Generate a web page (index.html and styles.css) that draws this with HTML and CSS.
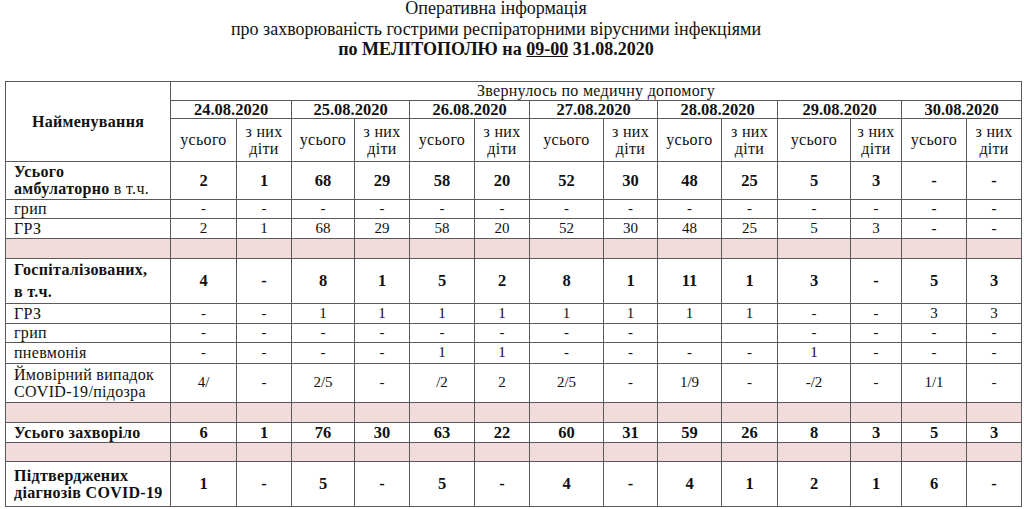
FILE: index.html
```html
<!DOCTYPE html>
<html lang="uk">
<head>
<meta charset="utf-8">
<title>Оперативна інформація</title>
<link rel="stylesheet" href="styles.css">
</head>
<body>
<header class="title">
  <div class="title-line">Оперативна інформація</div>
  <div class="title-line">про захворюваність гострими респіраторними вірусними інфекціями</div>
  <div class="title-line bold">по МЕЛІТОПОЛЮ на <span class="under">09-00</span> 31.08.2020</div>
</header>
<table class="report">
  <colgroup>
    <col class="c-name">
    <col class="c66"><col class="c55">
    <col class="c63"><col class="c55">
    <col class="c65"><col class="c55">
    <col class="c74"><col class="c54">
    <col class="c64"><col class="c56">
    <col class="c73"><col class="c51">
    <col class="c65"><col class="c55">
  </colgroup>
  <thead>
    <tr class="h-top">
      <th rowspan="3" class="name-head">Найменування</th>
      <th colspan="14" class="group-head">Звернулось по медичну допомогу</th>
    </tr>
    <tr class="h-dates">
      <th colspan="2">24.08.2020</th>
      <th colspan="2">25.08.2020</th>
      <th colspan="2">26.08.2020</th>
      <th colspan="2">27.08.2020</th>
      <th colspan="2">28.08.2020</th>
      <th colspan="2">29.08.2020</th>
      <th colspan="2">30.08.2020</th>
    </tr>
    <tr class="h-sub">
      <th>усього</th><th>з них<br>діти</th>
      <th>усього</th><th>з них<br>діти</th>
      <th>усього</th><th>з них<br>діти</th>
      <th>усього</th><th>з них<br>діти</th>
      <th>усього</th><th>з них<br>діти</th>
      <th>усього</th><th>з них<br>діти</th>
      <th>усього</th><th>з них<br>діти</th>
    </tr>
  </thead>
  <tbody>
    <tr class="r38 b">
      <td class="name"><b>Усього<br>амбулаторно</b> <span class="reg">в т.ч.</span></td>
      <td>2</td><td>1</td><td>68</td><td>29</td><td>58</td><td>20</td><td>52</td><td>30</td><td>48</td><td>25</td><td>5</td><td>3</td><td>-</td><td>-</td>
    </tr>
    <tr class="r19">
      <td class="name">грип</td>
      <td>-</td><td>-</td><td>-</td><td>-</td><td>-</td><td>-</td><td>-</td><td>-</td><td>-</td><td>-</td><td>-</td><td>-</td><td class="bd">-</td><td class="bd">-</td>
    </tr>
    <tr class="r20">
      <td class="name">ГРЗ</td>
      <td>2</td><td>1</td><td>68</td><td>29</td><td>58</td><td>20</td><td>52</td><td>30</td><td>48</td><td>25</td><td>5</td><td>3</td><td class="bd">-</td><td class="bd">-</td>
    </tr>
    <tr class="r20 pink">
      <td></td><td></td><td></td><td></td><td></td><td></td><td></td><td></td><td></td><td></td><td></td><td></td><td></td><td></td><td></td>
    </tr>
    <tr class="r40 b">
      <td class="name tall">Госпіталізованих,<br>в т.ч.</td>
      <td>4</td><td>-</td><td>8</td><td>1</td><td>5</td><td>2</td><td>8</td><td>1</td><td>11</td><td>1</td><td>3</td><td>-</td><td>5</td><td>3</td>
    </tr>
    <tr class="r20">
      <td class="name">ГРЗ</td>
      <td>-</td><td>-</td><td>1</td><td>1</td><td>1</td><td>1</td><td>1</td><td>1</td><td>1</td><td>1</td><td>-</td><td>-</td><td>3</td><td>3</td>
    </tr>
    <tr class="r19">
      <td class="name">грип</td>
      <td>-</td><td>-</td><td>-</td><td>-</td><td>-</td><td>-</td><td>-</td><td>-</td><td></td><td></td><td>-</td><td>-</td><td>-</td><td>-</td>
    </tr>
    <tr class="r21">
      <td class="name">пневмонія</td>
      <td>-</td><td>-</td><td>-</td><td>-</td><td>1</td><td>1</td><td>-</td><td>-</td><td>-</td><td>-</td><td>1</td><td>-</td><td>-</td><td>-</td>
    </tr>
    <tr class="r39">
      <td class="name">Ймовірний випадок<br>COVID-19/підозра</td>
      <td>4/</td><td>-</td><td>2/5</td><td>-</td><td>/2</td><td>2</td><td>2/5</td><td>-</td><td>1/9</td><td>-</td><td>-/2</td><td>-</td><td>1/1</td><td>-</td>
    </tr>
    <tr class="r20 pink">
      <td></td><td></td><td></td><td></td><td></td><td></td><td></td><td></td><td></td><td></td><td></td><td></td><td></td><td></td><td></td>
    </tr>
    <tr class="r20 b">
      <td class="name">Усього захворіло</td>
      <td>6</td><td>1</td><td>76</td><td>30</td><td>63</td><td>22</td><td>60</td><td>31</td><td>59</td><td>26</td><td>8</td><td>3</td><td>5</td><td>3</td>
    </tr>
    <tr class="r19 pink">
      <td></td><td></td><td></td><td></td><td></td><td></td><td></td><td></td><td></td><td></td><td></td><td></td><td></td><td></td><td></td>
    </tr>
    <tr class="r45 b">
      <td class="name">Підтверджених<br>діагнозів COVID-19</td>
      <td>1</td><td>-</td><td>5</td><td>-</td><td>5</td><td>-</td><td>4</td><td>-</td><td>4</td><td>1</td><td>2</td><td>1</td><td>6</td><td>-</td>
    </tr>
  </tbody>
</table>
</body>
</html>
```

FILE: styles.css
```css
html, body {
  margin: 0;
  padding: 0;
  background: #ffffff;
}
body {
  padding: 0 0 0 5px;
  font-family: "Liberation Serif", "Times New Roman", serif;
  color: #111;
}
.title {
  text-align: center;
  font-size: 18px;
  line-height: 20.5px;
  margin: -2px 37px 0 0;
}
.title-line.bold {
  font-weight: bold;
}
.under {
  text-decoration: underline;
}
.report {
  margin-top: 21px;
  border-collapse: collapse;
  table-layout: fixed;
  width: 1016px;
}
.report th,
.report td {
  border: 1px solid #5a5a5a;
  padding: 0;
  text-align: center;
  vertical-align: middle;
  font-size: 16px;
  letter-spacing: 0.3px;
  line-height: 17px;
  overflow: hidden;
  white-space: nowrap;
}
.c-name { width: 165px; }
.c66 { width: 66px; }
.c55 { width: 55px; }
.c63 { width: 63px; }
.c65 { width: 65px; }
.c74 { width: 74px; }
.c54 { width: 54px; }
.c64 { width: 64px; }
.c56 { width: 56px; }
.c73 { width: 73px; }
.c51 { width: 51px; }

.report th { font-weight: normal; }
.report th.name-head { font-weight: bold; font-size: 16px; }
.h-top th { height: 18px; }
.h-dates th { height: 17px; font-weight: bold; font-size: 16.5px; letter-spacing: 0; }
.h-sub th { height: 42px; }

.report td.name {
  text-align: left;
  padding-left: 8px;
  font-size: 16px;
  letter-spacing: 0.3px;
}
.report td { font-size: 15px; letter-spacing: 0; }
.b td { font-weight: bold; font-size: 16.5px; }
.name .reg { font-weight: normal; }
.bd { font-weight: bold; }
.report td.tall { line-height: 22px; }

.r19 td { height: 18px; }
.r20 td { height: 19px; }
.r21 td { height: 20px; }
.r38 td { height: 37px; }
.r39 td { height: 38px; }
.r40 td { height: 39px; }
.r45 td { height: 44px; }
.pink td { background: #f2dcdb; }
```
